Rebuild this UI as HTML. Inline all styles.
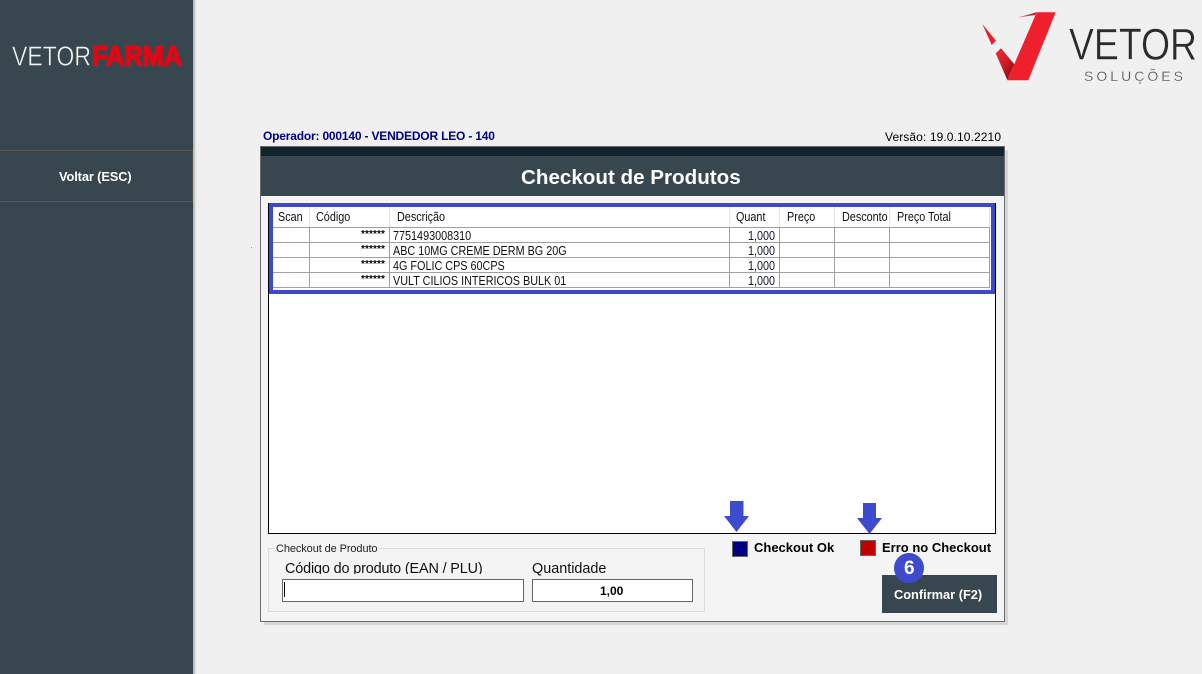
<!DOCTYPE html>
<html lang="pt"><head><meta charset="utf-8"><title>Checkout de Produtos</title>
<style>
html,body{margin:0;padding:0;width:1202px;height:674px;overflow:hidden;background:#f0f0f0;font-family:"Liberation Sans",Arial,sans-serif;color:#000}
div,span{position:absolute;box-sizing:border-box}
.t{white-space:nowrap;font-size:12px;line-height:14px}
.h{top:210px;font-size:12.5px;transform:scaleX(.865);transform-origin:0 50%;color:#111}
.l{position:absolute;background:#a0a0a0}
.hs{position:absolute;background:#e4e4e4;top:207px;width:1px;height:20px}
.star{left:361px;font-size:10px;line-height:10px;font-weight:bold;letter-spacing:.1px;white-space:nowrap}
.q{left:700px;width:75px;text-align:right;white-space:nowrap;font-size:12.5px;line-height:14px;color:#101830;transform:scaleX(.865);transform-origin:100% 50%}
.d{left:393px;white-space:nowrap;font-size:12.5px;line-height:14px;color:#111;transform:scaleX(.865);transform-origin:0 50%}
svg{position:absolute;overflow:visible}
</style></head><body>

<!-- Sidebar -->
<div style="left:193px;top:0;width:4px;height:674px;background:linear-gradient(90deg,#a9a9a9,#e6e6e6 70%,#f0f0f0)"></div>
<div style="left:0;top:0;width:193px;height:674px;background:#38474f"></div>
<div style="left:0;top:150px;width:193px;height:1px;background:#575757"></div>
<div style="left:0;top:201px;width:193px;height:1px;background:#575757"></div>
<div style="left:192px;top:150px;width:1px;height:52px;background:#4e5558"></div>
<svg style="left:0;top:0" width="193" height="100">
<text x="12" y="65.5" font-family="Liberation Sans" font-size="27.5" fill="#f4f4f4" stroke="#38474f" stroke-width=".5" textLength="79" lengthAdjust="spacingAndGlyphs">VETOR</text>
<text x="92" y="65.5" font-family="Liberation Sans" font-size="27.5" font-weight="bold" fill="#e30613" stroke="#e30613" stroke-width="1.5" textLength="90" lengthAdjust="spacingAndGlyphs">FARMA</text>
</svg>
<div class="t" style="left:59px;top:170px;font-weight:bold;font-size:12.8px;color:#fff;letter-spacing:-.1px">Voltar (ESC)</div>

<!-- Vetor logo -->
<svg style="left:0;top:0" width="1202" height="100">
<defs>
<linearGradient id="g" x1="0" y1="0" x2="1" y2="1"><stop offset="0" stop-color="#ee2a33"/><stop offset=".5" stop-color="#d01c25"/><stop offset="1" stop-color="#6f090d"/></linearGradient>
<linearGradient id="w" x1="0" y1="0" x2="1" y2="0"><stop offset="0" stop-color="#e88088"/><stop offset="1" stop-color="#a8141c"/></linearGradient>
</defs>
<polygon points="982.3,24 996,40.7 991.7,45" fill="#e8202b"/>
<polygon points="1001,48.3 995.7,53.3 1007.3,80 1014.3,64.3" fill="url(#g)"/>
<polygon points="1016.7,17.7 1036.7,12.3 1035,15" fill="url(#w)"/>
<polygon points="1055.7,12.3 1036.7,12.3 1007.3,80.3 1028.3,80.3" fill="#ef202b"/>
<text x="1069" y="59.5" font-family="Liberation Sans" font-size="44.5" fill="#2b2b2d" stroke="#f0f0f0" stroke-width=".4" textLength="128" lengthAdjust="spacingAndGlyphs">VETOR</text>
<text x="1084" y="81" font-family="Liberation Sans" font-size="14" fill="#555" stroke="#f0f0f0" stroke-width=".25" textLength="99" lengthAdjust="spacing">SOLUÇÕES</text>
</svg>

<div style="left:251px;top:247px;width:1px;height:1px;background:#9a9a9a"></div>

<!-- Top texts -->
<div class="t" style="left:263px;top:129px;font-weight:bold;color:#000080;letter-spacing:-.19px">Operador: 000140 - VENDEDOR LEO - 140</div>
<div class="t" style="left:885px;top:130px;letter-spacing:.1px">Versão: 19.0.10.2210</div>

<!-- Panel -->
<div style="left:264px;top:150px;width:744px;height:475px;background:#d6d6d6"></div>
<div style="left:260px;top:146px;width:745px;height:476px;background:#f4f4f4;border:1px solid #6a6a6a"></div>
<div style="left:261px;top:147px;width:743px;height:9px;background:#14232b"></div>
<div style="left:261px;top:156px;width:743px;height:40px;background:#38474f"></div>
<div class="t" style="left:521px;top:165px;font-size:20.6px;line-height:26px;font-weight:bold;color:#fff">Checkout de Produtos</div>

<!-- Grid -->
<div style="left:268px;top:203px;width:728px;height:331px;background:#fff;border:1px solid #000"></div>
<div class="l" style="left:273px;top:227px;width:717px;height:1px"></div>
<div class="l" style="left:273px;top:242px;width:717px;height:1px"></div>
<div class="l" style="left:273px;top:257px;width:717px;height:1px"></div>
<div class="l" style="left:273px;top:272px;width:717px;height:1px"></div>
<div class="l" style="left:273px;top:287px;width:717px;height:1px"></div>
<div class="l" style="left:309px;top:227px;width:1px;height:61px"></div>
<div class="l" style="left:389px;top:227px;width:1px;height:61px"></div>
<div class="l" style="left:729px;top:227px;width:1px;height:61px"></div>
<div class="l" style="left:779px;top:227px;width:1px;height:61px"></div>
<div class="l" style="left:834px;top:227px;width:1px;height:61px"></div>
<div class="l" style="left:889px;top:227px;width:1px;height:61px"></div>
<div class="l" style="left:989px;top:227px;width:1px;height:61px"></div>
<div class="hs" style="left:309px"></div><div class="hs" style="left:389px"></div><div class="hs" style="left:729px"></div><div class="hs" style="left:779px"></div><div class="hs" style="left:834px"></div><div class="hs" style="left:889px"></div><div class="hs" style="left:989px"></div>

<div class="t h" style="left:278px">Scan</div>
<div class="t h" style="left:316px">Código</div>
<div class="t h" style="left:397px">Descrição</div>
<div class="t h" style="left:736px">Quant</div>
<div class="t h" style="left:787px">Preço</div>
<div class="t h" style="left:842px">Desconto</div>
<div class="t h" style="left:897px">Preço Total</div>

<div class="star" style="top:230px">******</div>
<div class="star" style="top:245px">******</div>
<div class="star" style="top:260px">******</div>
<div class="star" style="top:275px">******</div>
<div class="d" style="top:229px">7751493008310</div>
<div class="d" style="top:244px">ABC 10MG CREME DERM BG 20G</div>
<div class="d" style="top:259px">4G FOLIC CPS 60CPS</div>
<div class="d" style="top:274px">VULT CILIOS INTERICOS BULK 01</div>
<div class="q" style="top:229px">1,000</div>
<div class="q" style="top:244px">1,000</div>
<div class="q" style="top:259px">1,000</div>
<div class="q" style="top:274px">1,000</div>

<!-- Blue frame -->
<div style="left:269px;top:203px;width:726px;height:91px;border:4px solid #3f48cc"></div>

<!-- Group box -->
<div style="left:268px;top:548px;width:437px;height:64px;border:1px solid #dcdcdc"></div>
<div class="t" style="left:275px;top:542px;padding:0 1px;background:#f4f4f4;font-size:11px;color:#222;letter-spacing:-.1px">Checkout de Produto</div>
<div class="t" style="left:285px;top:561px;height:13px;font-size:14.4px;line-height:16px;overflow:hidden;color:#111;letter-spacing:-.14px">Código do produto (EAN / PLU)</div>
<div class="t" style="left:532px;top:561px;font-size:14.4px;line-height:16px;color:#111">Quantidade</div>
<div style="left:282px;top:579px;width:242px;height:23px;background:#fff;border:1px solid #666"></div>
<div style="left:284px;top:582px;width:1px;height:15px;background:#000"></div>
<div style="left:532px;top:579px;width:161px;height:23px;background:#fff;border:1px solid #666"></div>
<div class="t" style="left:600px;top:584px;font-weight:bold">1,00</div>

<!-- Legend -->
<div style="left:732px;top:541px;width:16px;height:16px;background:#000080;border:1px solid #666"></div>
<div class="t" style="left:754px;top:541px;font-weight:bold;font-size:13px">Checkout Ok</div>
<div style="left:860px;top:540px;width:16px;height:16px;background:#c00000;border:1px solid #666"></div>
<div class="t" style="left:882px;top:541px;font-weight:bold;font-size:13px">Erro no Checkout</div>

<!-- Arrows -->
<svg style="left:0;top:0" width="1202" height="674">
<polygon points="730,501 743.5,501 743.5,516 749,516 736.5,532 724,516 730,516" fill="#3f4bcf"/>
<polygon points="863,503 876,503 876,518 882,518 869.5,534 857,518 863,518" fill="#3f4bcf"/>
</svg>

<!-- Button -->
<div style="left:882px;top:575px;width:115px;height:38px;background:#38474f"></div>
<div class="t" style="left:894px;top:588px;font-weight:bold;font-size:12.8px;color:#fff">Confirmar (F2)</div>
<div style="left:894px;top:553px;width:30px;height:30px;border-radius:50%;background:#3f4bcf"></div>
<div class="t" style="left:904px;top:558px;font-size:19px;line-height:21px;font-weight:bold;color:#fff">6</div>

</body></html>
